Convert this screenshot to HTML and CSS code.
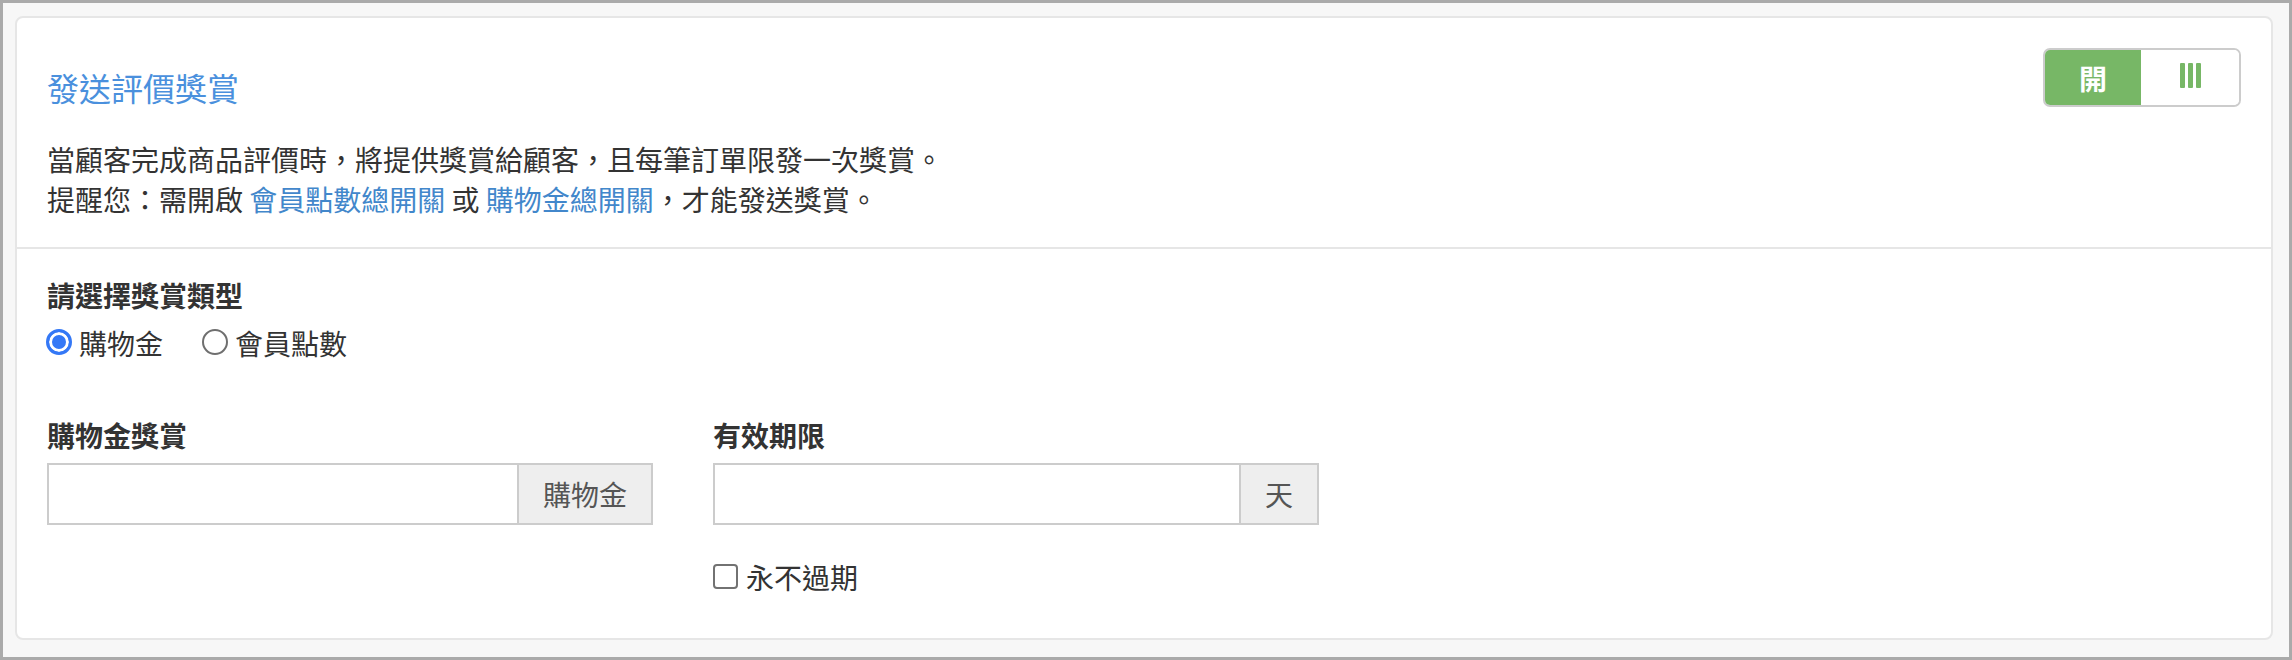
FILE: index.html
```html
<!DOCTYPE html>
<html lang="zh-Hant">
<head>
<meta charset="utf-8">
<title>發送評價獎賞</title>
<link rel="stylesheet" href="styles.css">
</head>
<body>
<div class="frame">
  <div class="card">
    <div class="card-head">
      <div class="head-row">
        <h2 class="title">發送評價獎賞</h2>
        <div class="toggle">
          <span class="toggle-on">開</span>
          <span class="toggle-off"><i class="bar"></i><i class="bar"></i><i class="bar"></i></span>
        </div>
      </div>
      <p class="desc">當顧客完成商品評價時，將提供獎賞給顧客，且每筆訂單限發一次獎賞。<br>提醒您：需開啟 <a href="#" class="link">會員點數總開關</a> 或 <a href="#" class="link">購物金總開關</a>，才能發送獎賞。</p>
    </div>
    <div class="card-body">
      <div class="field-label">請選擇獎賞類型</div>
      <div class="radio-row">
        <label class="choice"><input type="radio" name="type" class="radio" checked><span>購物金</span></label>
        <label class="choice"><input type="radio" name="type" class="radio"><span>會員點數</span></label>
      </div>
      <div class="fields">
        <div class="field">
          <div class="field-label">購物金獎賞</div>
          <div class="input-group">
            <input type="text" class="input">
            <span class="addon">購物金</span>
          </div>
        </div>
        <div class="field">
          <div class="field-label">有效期限</div>
          <div class="input-group">
            <input type="text" class="input">
            <span class="addon">天</span>
          </div>
          <label class="check-row"><input type="checkbox" class="checkbox"><span>永不過期</span></label>
        </div>
      </div>
    </div>
  </div>
</div>
</body>
</html>
```

FILE: styles.css
```css
html, body {
  margin: 0;
  padding: 0;
}
body {
  font-family: "Noto Sans CJK TC", "Noto Sans", sans-serif;
  color: #333;
  font-size: 28px;
  line-height: 40px;
}
.frame {
  box-sizing: border-box;
  width: 2292px;
  height: 660px;
  border: 3px solid #aaaaaa;
  background: #f7f7f7;
  padding: 13px 16px 17px 12px;
}
.card {
  box-sizing: border-box;
  height: 100%;
  background: #fff;
  border: 2px solid #e6e6e6;
  border-radius: 8px;
}
.card-head {
  padding: 30px 30px 28px 30px;
  border-bottom: 2px solid #e6e6e6;
}
.head-row {
  display: flex;
  justify-content: space-between;
  align-items: flex-end;
}
.title {
  margin: 0;
  font-size: 32px;
  line-height: 40px;
  font-weight: 400;
  color: #4a90dd;
}
.toggle {
  box-sizing: border-box;
  width: 198px;
  height: 59px;
  border: 2px solid #cccccc;
  border-radius: 7px;
  overflow: hidden;
  display: flex;
}
.toggle-on {
  width: 96px;
  background: #77b766;
  color: #fff;
  font-weight: 700;
  font-size: 28px;
  display: flex;
  align-items: center;
  justify-content: center;
}
.toggle-off {
  flex: 1;
  background: #fff;
  display: flex;
  align-items: center;
  justify-content: center;
  gap: 3px;
  padding-bottom: 4px;
}
.bar {
  display: block;
  width: 5px;
  height: 25px;
  border-radius: 1px;
  background: #77b766;
}
.desc {
  margin: 32px 0 0 0;
}
.link {
  color: #4287cb;
  text-decoration: none;
}
.card-body {
  padding: 26px 30px 30px 30px;
}
.field-label {
  font-weight: 700;
  margin-bottom: 8px;
}
.radio-row {
  display: flex;
  gap: 40px;
  height: 40px;
  align-items: center;
}
.choice {
  display: flex;
  align-items: center;
  gap: 7px;
}
.radio {
  appearance: none;
  -webkit-appearance: none;
  box-sizing: border-box;
  width: 26px;
  height: 26px;
  margin: -2px 0 0 -1px;
  border-radius: 50%;
  border: 2px solid #6f6f6f;
  background: #fff;
}
.radio:checked {
  border: 3px solid #3478f6;
  background: #3478f6;
  box-shadow: inset 0 0 0 3px #fff;
}
.fields {
  display: grid;
  grid-template-columns: 606px 606px;
  column-gap: 60px;
  margin-top: 52px;
  align-items: start;
}
.field-label + .input-group {
  margin-top: 1px;
}
.input-group {
  display: flex;
  height: 62px;
}
.input {
  box-sizing: border-box;
  flex: 1;
  min-width: 0;
  height: 62px;
  margin: 0;
  border: 2px solid #cccccc;
  border-radius: 0;
  background: #fff;
  font: inherit;
  padding: 0 16px;
  outline: none;
}
.addon {
  box-sizing: border-box;
  height: 62px;
  padding: 0 24px;
  border: 2px solid #cccccc;
  border-left: 0;
  background: #eeeeee;
  color: #555;
  display: flex;
  align-items: center;
}
.check-row {
  display: flex;
  align-items: center;
  gap: 8px;
  margin-top: 32px;
  height: 40px;
}
.checkbox {
  appearance: none;
  -webkit-appearance: none;
  box-sizing: border-box;
  width: 25px;
  height: 25px;
  margin: -2px 0 0 0;
  border: 2px solid #727272;
  border-radius: 4px;
  background: #fff;
}
```
